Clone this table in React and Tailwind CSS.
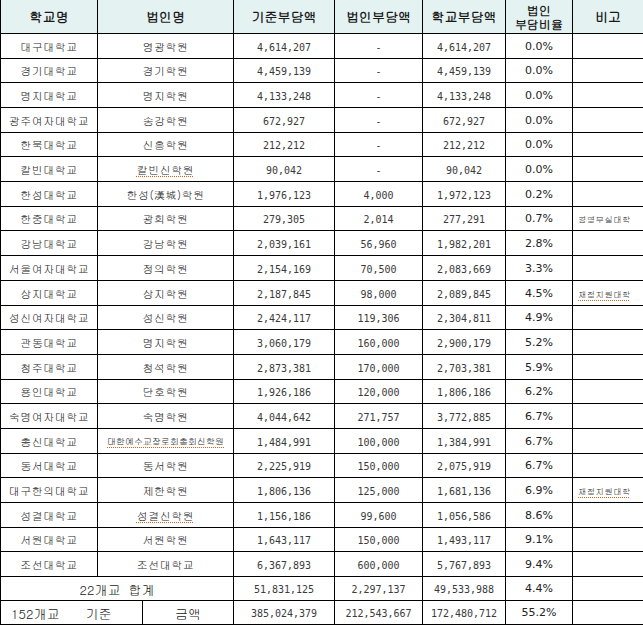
import React from "react";

const rows = [
  ["대구대학교", "영광학원", "4,614,207", "-", "4,614,207", "0.0%", ""],
  ["경기대학교", "경기학원", "4,459,139", "-", "4,459,139", "0.0%", ""],
  ["명지대학교", "명지학원", "4,133,248", "-", "4,133,248", "0.0%", ""],
  ["광주여자대학교", "송강학원", "672,927", "-", "672,927", "0.0%", ""],
  ["한북대학교", "신흥학원", "212,212", "-", "212,212", "0.0%", ""],
  ["칼빈대학교", "칼빈신학원", "90,042", "-", "90,042", "0.0%", ""],
  ["한성대학교", "한성(漢城)학원", "1,976,123", "4,000", "1,972,123", "0.2%", ""],
  ["한중대학교", "광희학원", "279,305", "2,014", "277,291", "0.7%", "경영부실대학"],
  ["강남대학교", "강남학원", "2,039,161", "56,960", "1,982,201", "2.8%", ""],
  ["서울여자대학교", "정의학원", "2,154,169", "70,500", "2,083,669", "3.3%", ""],
  ["상지대학교", "상지학원", "2,187,845", "98,000", "2,089,845", "4.5%", "재정지원대학"],
  ["성신여자대학교", "성신학원", "2,424,117", "119,306", "2,304,811", "4.9%", ""],
  ["관동대학교", "명지학원", "3,060,179", "160,000", "2,900,179", "5.2%", ""],
  ["청주대학교", "청석학원", "2,873,381", "170,000", "2,703,381", "5.9%", ""],
  ["용인대학교", "단호학원", "1,926,186", "120,000", "1,806,186", "6.2%", ""],
  ["숙명여자대학교", "숙명학원", "4,044,642", "271,757", "3,772,885", "6.7%", ""],
  ["총신대학교", "대한예수교장로회총회신학원", "1,484,991", "100,000", "1,384,991", "6.7%", ""],
  ["동서대학교", "동서학원", "2,225,919", "150,000", "2,075,919", "6.7%", ""],
  ["대구한의대학교", "제한학원", "1,806,136", "125,000", "1,681,136", "6.9%", "재정지원대학"],
  ["성결대학교", "성결신학원", "1,156,186", "99,600", "1,056,586", "8.6%", ""],
  ["서원대학교", "서원학원", "1,643,117", "150,000", "1,493,117", "9.1%", ""],
  ["조선대학교", "조선대학교", "6,367,893", "600,000", "5,767,893", "9.4%", ""],
];

const spell = new Set(["칼빈신학원", "성결신학원", "대한예수교장로회총회신학원"]);

const kr = "font-['Gulim','Noto_Sans_CJK_KR',sans-serif]";
const num = "font-['DejaVu_Sans_Mono',monospace]";
const pct = "font-['DejaVu_Sans',sans-serif]";
const cell = "border-r border-b border-black flex items-center justify-center overflow-hidden whitespace-nowrap";

function Row({ r, i }) {
  const top = Math.round(33 + (i * 543) / 22);
  const bot = Math.round(33 + ((i + 1) * 543) / 22);
  const h = bot - top;
  const hc = h === 25 ? "h-[25px]" : "h-[24px]";
  const corp = r[1];
  const small = corp.length > 10;
  return (
    <div className={`grid grid-cols-[97px_136px_101px_88px_83px_67px_71px] ${hc}`}>
      <div className={`${cell} ${kr} text-[11px] text-[#2a2a2a] pt-[2px] tracking-[0.5px]`}>{r[0]}</div>
      <div className={`${cell} ${kr} text-[#2a2a2a] pt-[2px] ${small ? "text-[9px] tracking-[0px]" : "text-[11px] tracking-[0.5px]"}`}>
        <span className={spell.has(corp) ? "underline decoration-dotted decoration-[#d2691e] underline-offset-2" : ""}>{corp}</span>
      </div>
      <div className={`${cell} ${num} text-[10px] text-[#3a3a3a] pt-[2px]`}>{r[2]}</div>
      <div className={`${cell} ${num} text-[10px] text-[#3a3a3a] pt-[2px]`}>{r[3]}</div>
      <div className={`${cell} ${num} text-[10px] text-[#3a3a3a] pt-[2px]`}>{r[4]}</div>
      <div className={`${cell} ${pct} text-[11px] text-[#222] pt-[2px]`}>{r[5]}</div>
      <div className={`${cell} ${kr} text-[8.5px] tracking-[0.3px] text-[#333] pt-[2px] justify-start pl-[5px]`}>
        {r[6] && (
          <span className={r[6].startsWith("재정") ? "underline decoration-dotted decoration-[#d2691e] underline-offset-2" : ""}>{r[6]}</span>
        )}
      </div>
    </div>
  );
}

export default function App() {
  return (
    <div className="w-[643px] h-[625px] overflow-hidden bg-white">
      <div className="w-[644px] border-l border-black">
        <div className={`grid grid-cols-[97px_136px_101px_88px_83px_67px_71px] h-[34px] bg-[#e5f2f2] ${kr} font-bold text-[13px] text-[#1a1a1a]`}>
          <div className={cell}>학교명</div>
          <div className={cell}>법인명</div>
          <div className={cell}>기준부담액</div>
          <div className={cell}>법인부담액</div>
          <div className={cell}>학교부담액</div>
          <div className={cell}>
            <p className="text-center leading-[14px] text-[12px] whitespace-pre-line">{"법인\n부담비율"}</p>
          </div>
          <div className={cell}>비고</div>
        </div>
        {rows.map((r, i) => (
          <Row key={i} r={r} i={i} />
        ))}
        <div className="grid grid-cols-[233px_101px_88px_83px_67px_71px] h-[24px]">
          <div className={`${cell} ${kr} text-[13px] text-[#222] pt-[2px] gap-[8px]`}>
            <span>22개교</span>
            <span>합계</span>
          </div>
          <div className={`${cell} ${num} text-[10px] text-[#3a3a3a] pt-[2px]`}>51,831,125</div>
          <div className={`${cell} ${num} text-[10px] text-[#3a3a3a] pt-[2px]`}>2,297,137</div>
          <div className={`${cell} ${num} text-[10px] text-[#3a3a3a] pt-[2px]`}>49,533,988</div>
          <div className={`${cell} ${pct} text-[11px] text-[#222] pt-[2px]`}>4.4%</div>
          <div className={cell}></div>
        </div>
        <div className="grid grid-cols-[142px_91px_101px_88px_83px_67px_71px] h-[24px]">
          <div className={`${cell} ${kr} text-[13px] text-[#222] pt-[2px] justify-start pl-[10px] gap-[26px]`}>
            <span>152개교</span>
            <span>기준</span>
          </div>
          <div className={`${cell} ${kr} text-[13px] text-[#222] pt-[2px]`}>금액</div>
          <div className={`${cell} ${num} text-[10px] text-[#3a3a3a] pt-[2px]`}>385,024,379</div>
          <div className={`${cell} ${num} text-[10px] text-[#3a3a3a] pt-[2px]`}>212,543,667</div>
          <div className={`${cell} ${num} text-[10px] text-[#3a3a3a] pt-[2px]`}>172,480,712</div>
          <div className={`${cell} ${pct} text-[11px] text-[#222] pt-[2px]`}>55.2%</div>
          <div className={cell}></div>
        </div>
      </div>
    </div>
  );
}
